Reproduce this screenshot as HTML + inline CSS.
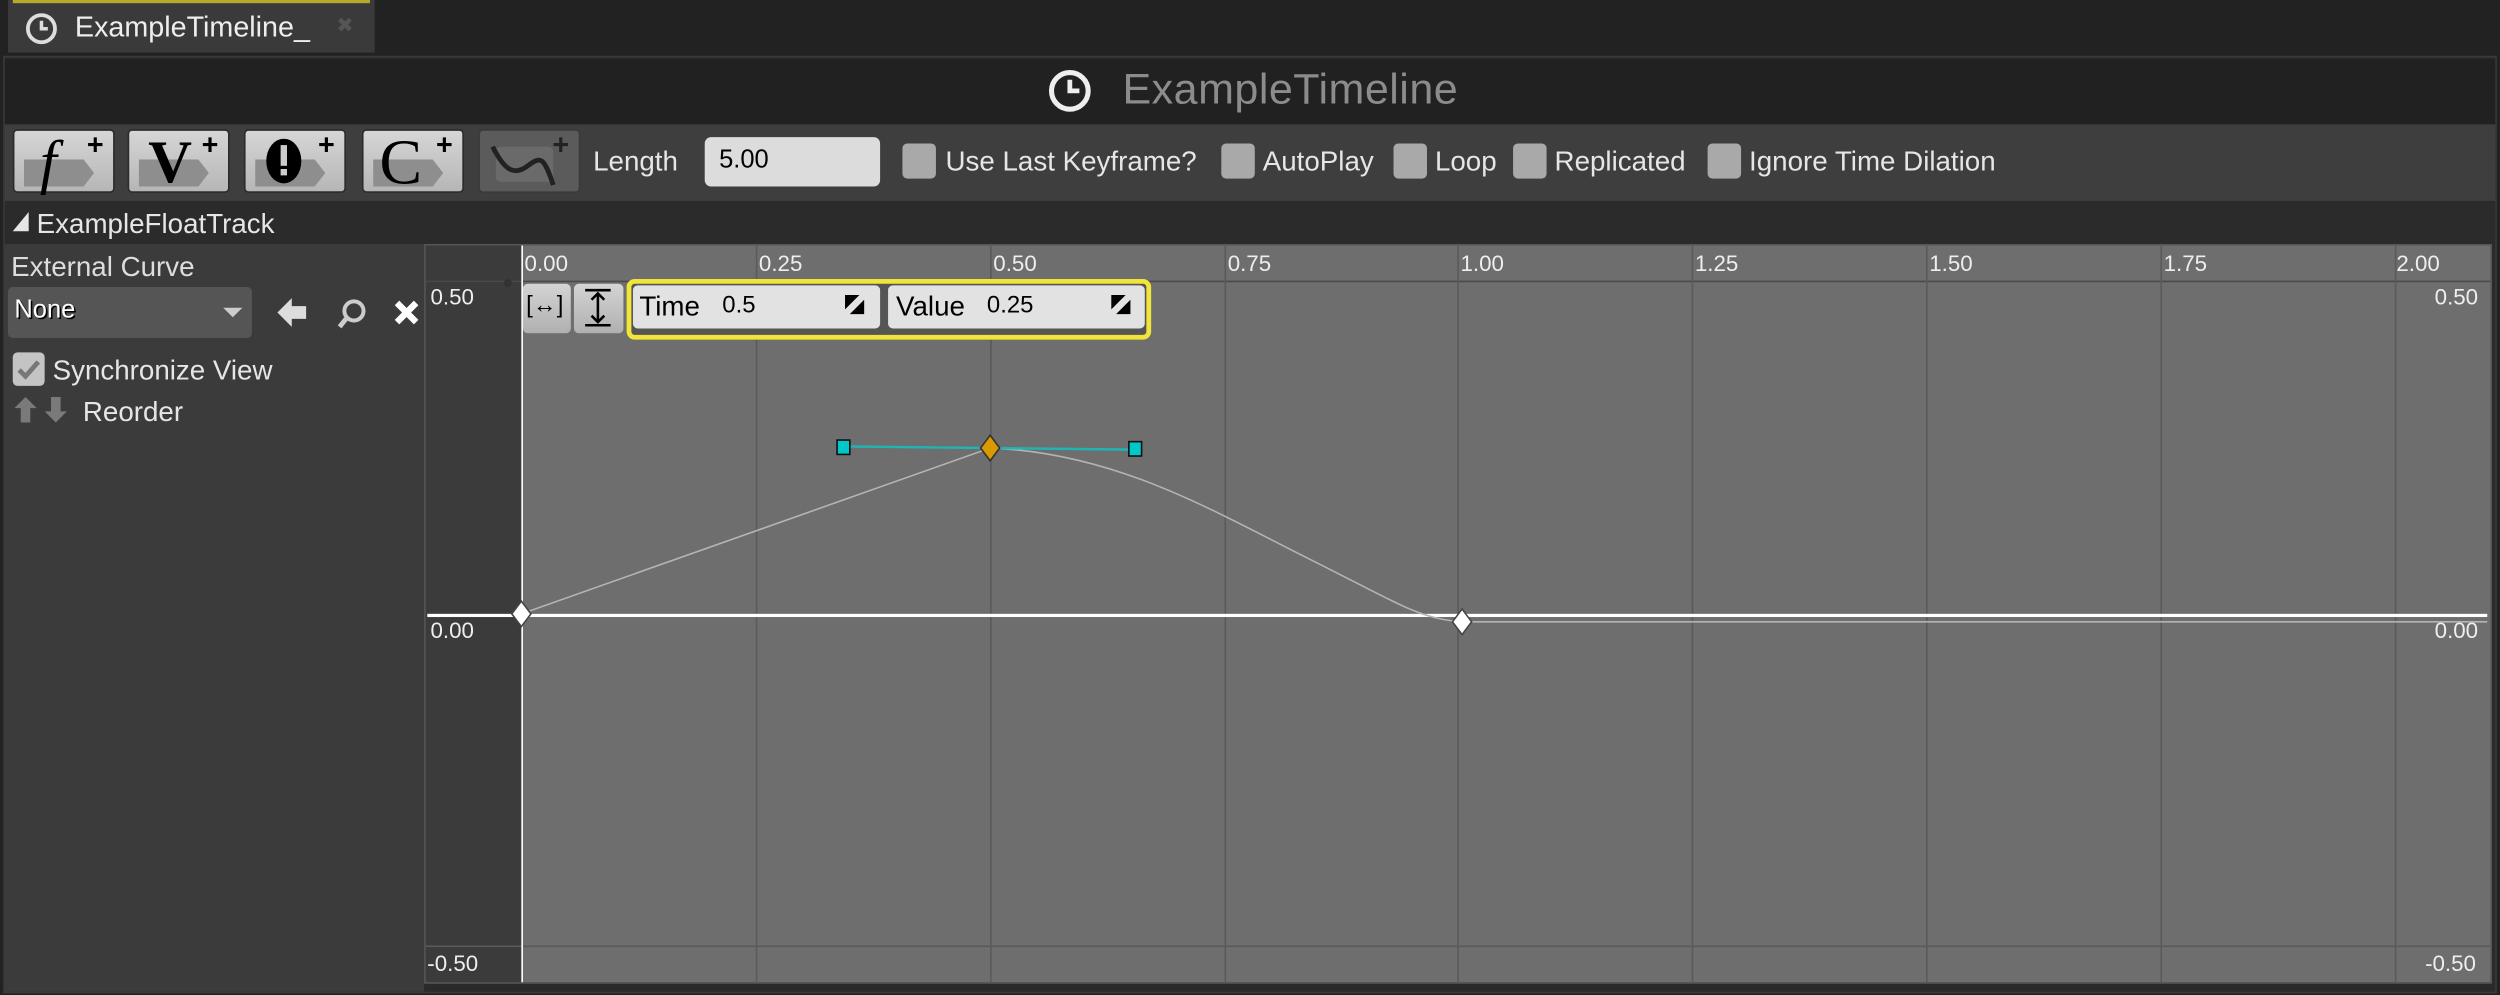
<!DOCTYPE html>
<html><head><meta charset="utf-8"><style>
*{margin:0;padding:0;box-sizing:border-box}
html,body{width:2500px;height:995px;overflow:hidden;background:#222}
#w{position:absolute;left:0;top:0;width:1568px;height:624px;transform:scale(1.5944);transform-origin:0 0;font-family:"Liberation Sans",sans-serif;color:#e6e6e6}
.a{position:absolute}
.t{position:absolute;white-space:nowrap;font-size:16px;letter-spacing:0}
.btn{position:absolute;top:81px;width:64px;height:40px;border-radius:3px;background:linear-gradient(#d6d6d6,#b6b6b6);border:1px solid #2c2c2c}
.btn .ar{position:absolute;left:6px;top:18px;width:44px;height:17px;background:#8e8e8e;clip-path:polygon(0 0,85% 0,100% 50%,85% 100%,0 100%)}
.btn .l{position:absolute;left:14px;top:-2px;font-family:"Liberation Serif",serif;font-weight:bold;font-size:38px;color:#000}
.btn .p{position:absolute;right:6px;top:-1px;font-size:18px;font-weight:bold;color:#000}
.cb{position:absolute;top:90px;width:21px;height:22px;border-radius:3px;background:#a9a9a9}
.vl{position:absolute;top:153px;width:1px;height:463px;background:#5a5a5a}
.rl{position:absolute;top:157px;font-size:14px;color:#eee}
.tb{font-size:17.4px}
</style></head><body><div id="w">
<div class="a" style="left:5px;top:0;width:230px;height:33px;background:#3a3a3a"></div>
<div class="a" style="left:8px;top:0;width:224px;height:2px;background:#b8a830"></div>
<svg class="a" style="left:15px;top:7px" width="22" height="22"><circle cx="11" cy="11" r="8.5" fill="none" stroke="#ddd" stroke-width="2.4"/><path d="M11 6v5h4" fill="none" stroke="#ddd" stroke-width="2.2"/></svg>
<div class="t" style="left:47px;top:7px;font-size:18px;color:#eee">ExampleTimeline_</div>
<div class="t" style="left:211px;top:8px;font-size:13px;color:#555">✖</div>
<div class="a" style="left:2px;top:35px;width:1564px;height:588px;background:#2a2a2a;border:1px solid #3a3a3a"></div>
<div class="a" style="left:3px;top:37px;width:1562px;height:41px;background:#212121"></div>
<svg class="a" style="left:656px;top:42px" width="30" height="30"><circle cx="15" cy="15" r="11.5" fill="none" stroke="#eee" stroke-width="3.2"/><path d="M15 8v7h6" fill="none" stroke="#eee" stroke-width="3"/></svg>
<div class="t" style="left:704px;top:41px;font-size:27px;color:#8c8c8c;letter-spacing:0.3px">ExampleTimeline</div>
<div class="a" style="left:3px;top:78px;width:1562px;height:48px;background:#3e3e3e"></div>
<div class="btn" style="left:8px"><div class="ar"></div><div class="l" style="font-style:italic;left:16px;font-weight:normal">f</div><div class="p">+</div></div>
<div class="btn" style="left:80px"><div class="ar"></div><div class="l" style="left:12px">V</div><div class="p">+</div></div>
<div class="btn" style="left:153px"><div class="ar"></div><div class="a" style="left:13px;top:5px;width:22px;height:28px;border-radius:50%;background:#000"></div><div class="a" style="left:22px;top:9px;width:4px;height:13px;background:#ccc"></div><div class="a" style="left:22px;top:24px;width:4px;height:4px;background:#ccc"></div><div class="p">+</div></div>
<div class="btn" style="left:227px"><div class="ar"></div><div class="l" style="left:10px;font-weight:normal;font-size:40px;top:-4px">C</div><div class="p">+</div></div>
<div class="btn" style="left:300px;background:#5b5b5b;border-color:#3a3a3a"><div class="a" style="left:10px;top:10px;width:36px;height:22px;background:#6a6a6a;border-radius:3px"></div><svg class="a" style="left:6px;top:6px" width="44" height="30"><path d="M2 4C10 20 16 22 24 16S34 10 40 28" fill="none" stroke="#222" stroke-width="3"/></svg><div class="p" style="color:#222">+</div></div>
<div class="t tb" style="left:372px;top:91px">Length</div>
<div class="a" style="left:442px;top:86px;width:110px;height:31px;background:#dcdcdc;border-radius:4px"></div>
<div class="t" style="left:451px;top:92px;font-size:16px;color:#000">5.00</div>
<div class="cb" style="left:566px"></div><div class="t tb" style="left:593px;top:91px">Use Last Keyframe?</div>
<div class="cb" style="left:766px"></div><div class="t tb" style="left:792px;top:91px">AutoPlay</div>
<div class="cb" style="left:874px"></div><div class="t tb" style="left:900px;top:91px">Loop</div>
<div class="cb" style="left:949px"></div><div class="t tb" style="left:975px;top:91px">Replicated</div>
<div class="cb" style="left:1071px"></div><div class="t tb" style="left:1097px;top:91px">Ignore Time Dilation</div>
<div class="a" style="left:3px;top:127px;width:1562px;height:25px;background:#2b2b2b"></div>
<div class="a" style="left:8px;top:133px;width:0;height:0;border-left:10px solid transparent;border-bottom:12px solid #e6e6e6"></div>
<div class="t tb" style="left:23px;top:130px">ExampleFloatTrack</div>
<div class="a" style="left:3px;top:153px;width:263px;height:469px;background:#3b3b3b"></div>
<div class="t tb" style="left:7px;top:157px;color:#ddd">External Curve</div>
<div class="a" style="left:5px;top:180px;width:153px;height:32px;background:#555;border-radius:3px"></div>
<div class="t" style="left:9px;top:186px;font-size:16px;color:#fff;text-shadow:1px 1px 0 #000">None</div>
<div class="a" style="left:140px;top:193px;border-left:6px solid transparent;border-right:6px solid transparent;border-top:6px solid #ccc"></div>
<svg class="a" style="left:172px;top:185px" width="96" height="24"><path d="M2 11l9-9v5h9v8h-9v5z" fill="#ddd"/><circle cx="50" cy="10" r="6" fill="none" stroke="#ccc" stroke-width="2.5"/><path d="M45 15l-4 5" stroke="#ccc" stroke-width="3"/><path d="M77 5l12 12M89 5L77 17" stroke="#fff" stroke-width="4"/></svg>
<div class="a" style="left:8px;top:221px;width:20px;height:21px;background:#c4c4c4;border-radius:3px"></div>
<svg class="a" style="left:8px;top:221px" width="20" height="21"><path d="M4 11l4 4 8-9" fill="none" stroke="#777" stroke-width="3"/></svg>
<div class="t tb" style="left:33px;top:222px">Synchronize View</div>
<svg class="a" style="left:8px;top:248px" width="40" height="18"><path d="M8 1l7 7h-4v9H5V8H1z" fill="#7a7a7a"/><path d="M27 17l7-7h-4V1h-6v9h-4z" fill="#7a7a7a"/></svg>
<div class="t tb" style="left:52px;top:248px">Reorder</div>
<div class="a" style="left:266px;top:153px;width:1297px;height:464px;background:#3b3b3b;border:1px solid #555"></div>
<div class="a" style="left:327px;top:154px;width:1235px;height:462px;background:#6e6e6e"></div>
<div class="a" style="left:267px;top:176px;width:1295px;height:1px;background:#4a4a4a"></div>
<div class="a" style="left:267px;top:593px;width:1295px;height:1px;background:#5a5a5a"></div>
<div class="vl" style="left:474px"></div><div class="vl" style="left:621px"></div><div class="vl" style="left:768px"></div><div class="vl" style="left:914px"></div><div class="vl" style="left:1061px"></div><div class="vl" style="left:1208px"></div><div class="vl" style="left:1355px"></div><div class="vl" style="left:1502px"></div>
<div class="a" style="left:327px;top:154px;width:1px;height:462px;background:#fff"></div>
<div class="a" style="left:316px;top:175px;width:5px;height:5px;border-radius:50%;background:#333"></div>
<div class="rl" style="left:329px">0.00</div><div class="rl" style="left:476px">0.25</div><div class="rl" style="left:623px">0.50</div><div class="rl" style="left:770px">0.75</div><div class="rl" style="left:916px">1.00</div><div class="rl" style="left:1063px">1.25</div><div class="rl" style="left:1210px">1.50</div><div class="rl" style="left:1357px">1.75</div><div class="rl" style="left:1503px">2.00</div>
<div class="rl" style="left:270px;top:178px">0.50</div><div class="rl" style="left:270px;top:387px">0.00</div><div class="rl" style="left:268px;top:596px">-0.50</div>
<div class="rl" style="left:1527px;top:178px">0.50</div><div class="rl" style="left:1527px;top:387px">0.00</div><div class="rl" style="left:1521px;top:596px">-0.50</div>
<div class="a" style="left:268px;top:385px;width:1292px;height:2px;background:#fff"></div>
<svg class="a" style="left:0;top:0" width="1568" height="624">
<path d="M327 385L621 281C700 284 760 320 820 350S890 388 917 390L1560 390" fill="none" stroke="#b4b4b4" stroke-width="1"/>
<path d="M529 280L621 281L712 282" stroke="#1fb5b5" stroke-width="1.5" fill="none"/>
<rect x="525" y="276" width="8" height="9" fill="#00c8c8" stroke="#111"/>
<rect x="708" y="277" width="8" height="9" fill="#00c8c8" stroke="#111"/>
<path d="M621 273l6 8-6 8-6-8z" fill="#d89a00" stroke="#333"/>
<path d="M327 377l6 8-6 8-6-8z" fill="#fff" stroke="#444"/>
<path d="M917 382l6 8-6 8-6-8z" fill="#fff" stroke="#444"/>
</svg>
<div class="a" style="left:328px;top:178px;width:30px;height:31px;background:linear-gradient(#d4d4d4,#b0b0b0);border-radius:3px"></div>
<div class="t" style="left:330px;top:183px;font-size:15px;color:#000">[↔]</div>
<div class="a" style="left:360px;top:178px;width:31px;height:31px;background:linear-gradient(#d4d4d4,#b0b0b0);border-radius:3px"></div>
<svg class="a" style="left:364px;top:180px" width="22" height="26"><path d="M3 2h16M3 24h16M11 4v18M7 8l4-4 4 4M7 18l4 4 4-4" fill="none" stroke="#000" stroke-width="1.6"/></svg>
<div class="a" style="left:393px;top:175px;width:329px;height:38px;border:3px solid #f2e53a;border-radius:5px;background:#555"></div>
<div class="a" style="left:397px;top:179px;width:155px;height:27px;background:#e2e2e2;border-radius:3px"></div>
<div class="t" style="left:401px;top:182px;font-size:17.4px;color:#000">Time</div><div class="t" style="left:453px;top:183px;font-size:15px;color:#000">0.5</div>
<div class="a" style="left:557px;top:179px;width:161px;height:27px;background:#e2e2e2;border-radius:3px"></div>
<div class="t" style="left:562px;top:182px;font-size:17.4px;color:#000">Value</div><div class="t" style="left:619px;top:183px;font-size:15px;color:#000">0.25</div>
<svg class="a" style="left:529px;top:184px" width="14" height="14"><path d="M1 1h9L1 10z M13 4v9H4z" fill="#000"/></svg>
<svg class="a" style="left:696px;top:184px" width="14" height="14"><path d="M1 1h9L1 10z M13 4v9H4z" fill="#000"/></svg>
</div></body></html>
